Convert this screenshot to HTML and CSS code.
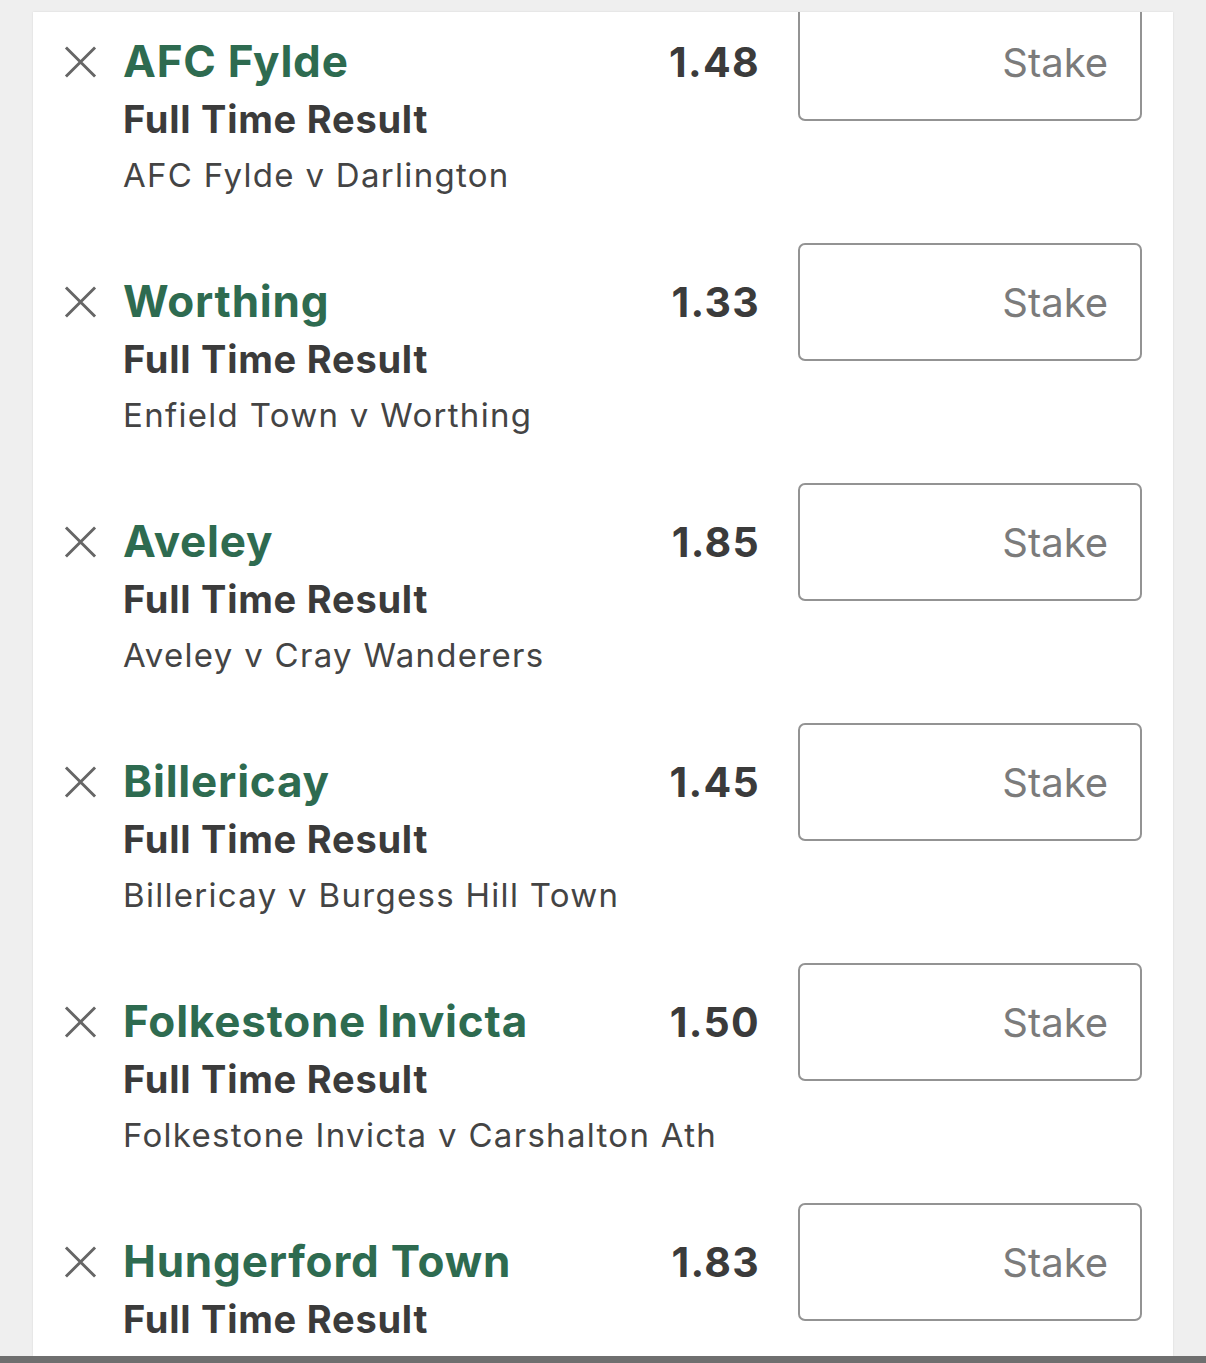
FILE: index.html
```html
<!DOCTYPE html>
<html>
<head>
<meta charset="utf-8">
<link rel="stylesheet" href="styles.css">
</head>
<body>
<div class="screen">
  <div class="panel">
    <div class="list">
      <div class="bet">
        <svg class="remove" viewBox="0 0 34 34"><path d="M2 2 L32 32 M32 2 L2 32"/></svg>
        <div class="info">
          <div class="team">AFC Fylde</div>
          <div class="market">Full Time Result</div>
          <div class="match">AFC Fylde v Darlington</div>
        </div>
        <div class="odds">1.48</div>
        <div class="stake">Stake</div>
      </div>
      <div class="bet">
        <svg class="remove" viewBox="0 0 34 34"><path d="M2 2 L32 32 M32 2 L2 32"/></svg>
        <div class="info">
          <div class="team">Worthing</div>
          <div class="market">Full Time Result</div>
          <div class="match">Enfield Town v Worthing</div>
        </div>
        <div class="odds">1.33</div>
        <div class="stake">Stake</div>
      </div>
      <div class="bet">
        <svg class="remove" viewBox="0 0 34 34"><path d="M2 2 L32 32 M32 2 L2 32"/></svg>
        <div class="info">
          <div class="team">Aveley</div>
          <div class="market">Full Time Result</div>
          <div class="match">Aveley v Cray Wanderers</div>
        </div>
        <div class="odds">1.85</div>
        <div class="stake">Stake</div>
      </div>
      <div class="bet">
        <svg class="remove" viewBox="0 0 34 34"><path d="M2 2 L32 32 M32 2 L2 32"/></svg>
        <div class="info">
          <div class="team">Billericay</div>
          <div class="market">Full Time Result</div>
          <div class="match">Billericay v Burgess Hill Town</div>
        </div>
        <div class="odds">1.45</div>
        <div class="stake">Stake</div>
      </div>
      <div class="bet">
        <svg class="remove" viewBox="0 0 34 34"><path d="M2 2 L32 32 M32 2 L2 32"/></svg>
        <div class="info">
          <div class="team">Folkestone Invicta</div>
          <div class="market">Full Time Result</div>
          <div class="match">Folkestone Invicta v Carshalton Ath</div>
        </div>
        <div class="odds">1.50</div>
        <div class="stake">Stake</div>
      </div>
      <div class="bet">
        <svg class="remove" viewBox="0 0 34 34"><path d="M2 2 L32 32 M32 2 L2 32"/></svg>
        <div class="info">
          <div class="team">Hungerford Town</div>
          <div class="market">Full Time Result</div>
        </div>
        <div class="odds">1.83</div>
        <div class="stake">Stake</div>
      </div>
    </div>
  </div>
  <div class="bottom-bar"></div>
</div>
</body>
</html>
```

FILE: styles.css
```css
* { box-sizing: border-box; }
html, body {
  margin: 0;
  padding: 0;
  background: #efefef;
}
body {
  font-family: Inter, "Noto Sans", sans-serif;
  width: 1206px;
  height: 1363px;
  overflow: hidden;
}
.screen {
  display: flex;
  flex-direction: column;
  height: 1363px;
}
.panel {
  flex: 1;
  margin: 12px 33px 0 33px;
  background: #fff;
  overflow: hidden;
  box-shadow: 0 0 2px rgba(0,0,0,0.10);
}
.list {
  margin-top: -9px;
  display: flex;
  flex-direction: column;
}
.bet {
  height: 240px;
  flex: none;
  display: grid;
  grid-template-columns: 33px minmax(0, 1fr) auto 344px;
  column-gap: 28px;
  align-items: start;
  padding: 0 31px 0 30px;
}
.bet .odds { margin-right: 10px; }
.remove {
  width: 33px;
  height: 34px;
  margin-top: 42px;
  margin-left: 1px;
  stroke: #666;
  stroke-width: 3;
  fill: none;
}
.info {
  display: flex;
  flex-direction: column;
  padding-top: 30px;
  white-space: nowrap;
  margin-left: -1px;
}
.team {
  color: #2e6b50;
  font-weight: 700;
  font-size: 44px;
  line-height: 56px;
  letter-spacing: 0.8px;
}
.market {
  color: #3b3b3b;
  font-weight: 700;
  font-size: 38px;
  line-height: 56px;
  letter-spacing: 0.75px;
  margin-top: 2px;
}
.match {
  color: #444;
  font-weight: 400;
  font-size: 33px;
  line-height: 54px;
  letter-spacing: 1.3px;
  margin-top: 1px;
}
.odds {
  color: #3b3b3b;
  font-weight: 700;
  font-size: 41px;
  line-height: 56px;
  letter-spacing: 1.3px;
  padding-top: 31px;
}
.stake {
  height: 118px;
  border: 2px solid #939393;
  border-radius: 7px;
  display: flex;
  align-items: center;
  justify-content: flex-end;
  padding-right: 32px;
  color: #7b7b7b;
  font-size: 40px;
}
.bottom-bar {
  height: 7px;
  background: #6f6f6f;
}
```
